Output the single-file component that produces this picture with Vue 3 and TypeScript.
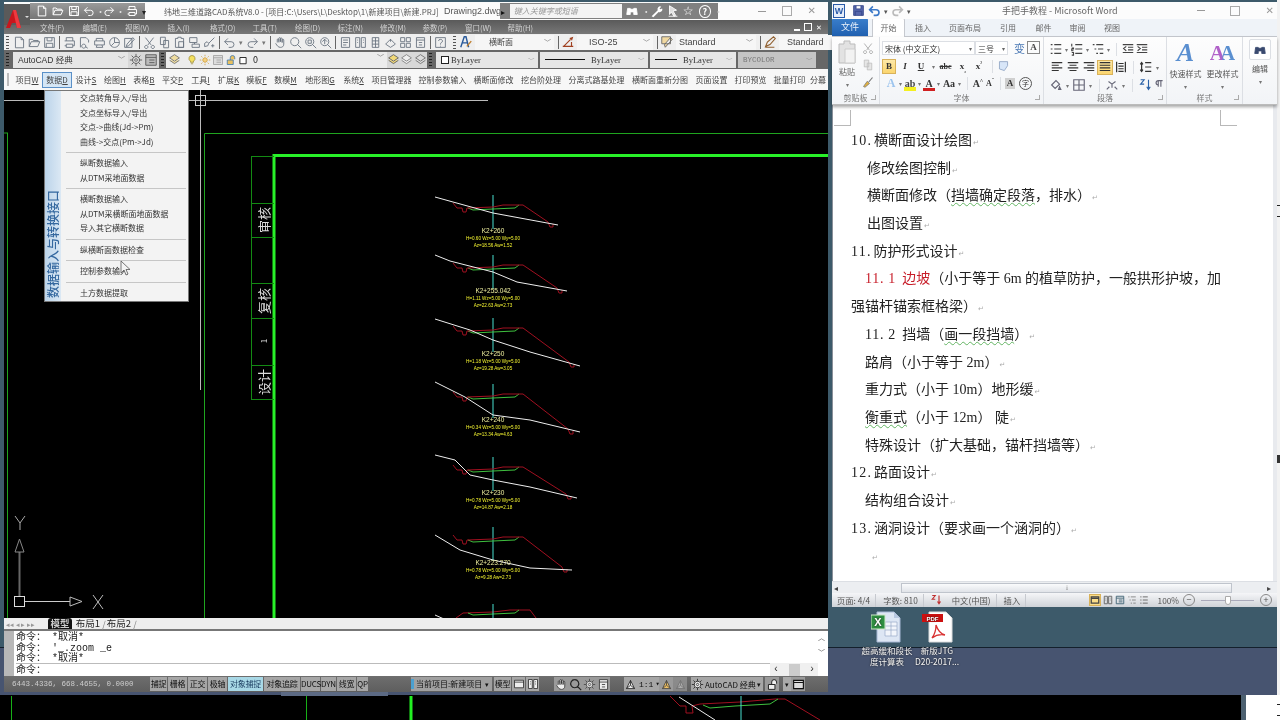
<script setup lang="ts">
const ic: Record<string, string> = {
  file: 'M3 1.500h7l3 3v10H3z M10 1.500v3h3',
  open: 'M1.500 13V4h4l1 1.500h6V7 M1.500 13l2.500-6h10.500l-2.500 6z',
  save: 'M2 2h12v12H2z M5 2v4h6V2 M4 14V9h8v5',
  print: 'M4 6V2h8v4 M2 6h12v6h-2 M4 12H2 M4 10h8v4H4z',
  preview: 'M3 14V2h7l3 3v3 M7 10a2.500 2.500 0 1 0 .1 0 M9 13l3 2',
  plot: 'M4 6V3h8v3 M2 6h12v5H2z M5 11l-1 3h8l-1-3',
  publish: 'M8 2a6 6 0 1 0 .1 0 M8 2v6h6 M4 12l4-4',
  edit: 'M2 14V3h9v11z M5 10l7-8 2 2-7 8-3 1z',
  cut: 'M3 2l7 9 M13 2l-7 9 M4 11.500a2 2 0 1 0 .1 0 M12 11.500a2 2 0 1 0 .1 0',
  copy: 'M3 1.500h6v9H3z M7 5.500h6v9H7z',
  paste: 'M3 3h3V1.500h4V3h3v11H3z M7 7h6v7H7z',
  match: 'M2 2h9v6H2z M5 10h9v4H5z M8 8v2',
  brush: 'M2 13l4-1 1-3-2-2-3 2z M7 9l7-7 M10 12h4 M12 10v4',
  undo: 'M6 3L2 7l4 4 M2 7h8a3.500 3.500 0 0 1 0 7H7',
  redo: 'M10 3l4 4-4 4 M14 7H6a3.500 3.500 0 0 0 0 7h3',
  pan: 'M4 8V4.500a1 1 0 0 1 2 0V8 M6 7V3a1 1 0 0 1 2 0v4 M8 7V3.500a1 1 0 0 1 2 0V8 M10 8V5a1 1 0 0 1 2 0v5c0 3-2 4-4 4-3 0-4-2-6-5',
  zoom: 'M7 2a5 5 0 1 0 .1 0 M10.500 10.500L15 15',
  zoomw: 'M7 2a5 5 0 1 0 .1 0 M10.500 10.500L15 15 M5 5h4v4H5z',
  zoomp: 'M7 2a5 5 0 1 0 .1 0 M10.500 10.500L15 15 M7 4v6 M4 7l3-3 3 3',
  prop: 'M3 2h10v12H3z M5 5h6 M5 8h6 M5 11h4',
  dc: 'M2 2h5v12H2z M9 2h5v12H9z M4 5h1 M4 8h1 M11 5h1 M11 8h1',
  tool: 'M4 2h8v12H4z M4 6h8 M4 10h8 M8 2v12',
  sheet: 'M2 10l6-6 6 6-6 4z M8 4v3',
  calc: 'M2 2h5v5H2z M9 2h5v5H9z M2 9h5v5H2z M9 9h5v5H9z',
  block: 'M3 2h10v12H3z M3 5h10 M6 8h4 M6 11h4',
  help: 'M2 2h12v12H2z M5.500 6a2.500 2 0 1 1 3.500 2L8 9.500v1 M8 12v1',
  gear: 'M8 4a4 4 0 1 0 .1 0 M8 6.500a1.500 1.500 0 1 0 .1 0 M8 1v3 M8 12v3 M1 8h3 M12 8h3 M3 3l2 2 M11 11l2 2 M13 3l-2 2 M5 11l-2 2',
  panel: 'M2 2h12v12H2z M2 5h12 M6 8h6 M6 11h6',
  layers: 'M2 6l6-4 6 4-6 4z M2 9l6 4 6-4',
  bulb: 'M8 2a4 4 0 0 1 2 7.500V11H6V9.500A4 4 0 0 1 8 2z M6.500 13h3',
  sun: 'M8 5a3 3 0 1 0 .1 0 M8 1v2 M8 13v2 M1 8h2 M13 8h2 M3 3l1.500 1.500 M13 3l-1.500 1.500 M3 13l1.500-1.500 M13 13l-1.500-1.500',
  lock: 'M3 8h8v6H3z M7 8V5a3 3 0 0 1 6 0v2',
  square: 'M3 4h10v10H3z',
  pen: 'M3 13l2-5 7-6 2 2-6 7z M3 14h10',
  dim: 'M2 13h12 M3 13l8-8 M10 4l3-1-1 3 M12 13V8',
  style: 'M2 2h10v8H2z M6 14l8-9-2-2-7 8z',
  binoc: 'M3 5h3v7H2zM10 5h3l1 7h-4z M6 6h4v3H6z',
  magnify: 'M7 2a5 5 0 1 0 .1 0 M10.500 10.500L15 15',
  scale: 'M8 3l5 10H3z M8 3v6 M3 13l5-4 5 4',
  win: 'M2 3h12v10H2z M2 5.500h12',
  list: 'M2 3h2 M6 3h8 M2 8h2 M6 8h8 M2 13h2 M6 13h8',
  nums: 'M2 2v3 M6 3h8 M2 7h2v1H2v2h2 M6 8h8 M2 12h2v3H2 M6 13h8',
  levels: 'M2 3h2 M6 3h8 M4 8h2 M8 8h6 M6 13h2 M10 13h4',
  outdent: 'M2 3h12 M8 6h6 M8 9h6 M2 12h12 M6 5L3 7.500 6 10',
  indent: 'M2 3h12 M8 6h6 M8 9h6 M2 12h12 M3 5l3 2.500L3 10',
  left: 'M2 3h12 M2 6h8 M2 9h12 M2 12h8',
  center: 'M2 3h12 M4 6h8 M2 9h12 M4 12h8',
  right: 'M2 3h12 M6 6h8 M2 9h12 M6 12h8',
  justify: 'M2 3h12 M2 6h12 M2 9h12 M2 12h12',
  dist: 'M3 2v12 M13 2v12 M5 4h6 M5 7h6 M5 10h6 M5 13h6',
  spacing: 'M3 3v10 M1.500 5L3 3l1.500 2 M1.500 11L3 13l1.500-2 M7 3h7 M7 8h7 M7 13h7',
  shade: 'M3 8l5-5 4 4-5 5z M12 10l1.500 3H11z',
  border: 'M2 2h12v12H2z M2 8h12 M8 2v12',
  chinese: 'M2 13l3-3 M14 13l-3-3 M4 4l4 3 4-3 M8 7v4',
  sort: 'M3 2h4L3 7h4 M12 2v11 M10 10l2 3 2-3',
  para: 'M6 3v7 M9 3v7 M6 3a2.500 2.500 0 0 0 0 5 M6 3h5',
}

const row1 = ['file', 'open', 'save', '|', 'print', 'preview', 'plot', 'publish', 'edit', '|', 'cut', 'copy', 'paste', 'match', 'brush', '|', 'undo', 'v', 'redo', 'v', '|', 'pan', 'zoom', 'zoomw', 'zoomp', '|', 'prop', 'dc', 'tool', 'sheet', 'calc', 'block', '|', 'help']
const qa = [
  { n: 'file', w: 16 }, { n: 'open', w: 16 }, { n: 'save', w: 16 }, { n: 'undo', w: 14 }, { n: '·', w: 6 },
  { n: 'redo', w: 14 }, { n: '·', w: 8 }, { n: 'print', w: 15 },
]
const cadMenu = ['文件(F)', '编辑(E)', '视图(V)', '插入(I)', '格式(O)', '工具(T)', '绘图(D)', '标注(N)', '修改(M)', '参数(P)', '窗口(W)', '帮助(H)']
const custom = [
  { t: '项目W', w: 30 }, { t: '数据D', w: 30, on: true }, { t: '设计S', w: 28 }, { t: '绘图H', w: 30 }, { t: '表格B', w: 28 },
  { t: '平交P', w: 29 }, { t: '工具I', w: 27 }, { t: '扩展K', w: 29 }, { t: '模板F', w: 27 }, { t: '数模M', w: 31 },
  { t: '地形图G', w: 38 }, { t: '系统X', w: 29 }, { t: '项目管理器', w: 47 }, { t: '控制参数输入', w: 55 }, { t: '横断面修改', w: 47 },
  { t: '挖台阶处理', w: 48 }, { t: '分离式路基处理', w: 63 }, { t: '横断面重新分图', w: 64 }, { t: '页面设置', w: 39 },
  { t: '打印预览', w: 39 }, { t: '批量打印', w: 39 }, { t: '分幕', w: 18 },
]
const menuItems = [
  ['交点转角导入/导出', '交点坐标导入/导出', '交点->曲线(Jd->Pm)', '曲线->交点(Pm->Jd)'],
  ['纵断数据输入', '从DTM采地面数据'],
  ['横断数据输入', '从DTM采横断面地面数据', '导入其它横断数据'],
  ['纵横断面数据检查'],
  ['控制参数输入'],
  ['土方数据提取'],
]

const shift = (pts: number[][], y: number) => pts.map(p => `${p[0]},${p[1] + y}`).join(' ')
const redLine = (y: number, ex: number, ey: number) =>
  shift([[453, 8], [457, 13], [462, 13], [463, 17], [466, 17], [467, 13], [493, 12], [503, 10], [523, 10]], y) +
  ` ${ex - 10},${ey - 3} ${ex - 8},${ey + 2} ${ex - 5},${ey + 2} ${ex - 5},${ey - 1}`
const greenLine = (y: number) => shift([[468, 13], [473, 15], [493, 14], [515, 13], [519, 10]], y)

const sections = [
  { y: 195, ex: 558, ey: 225, ground: '435,197 453,202 493,213 520,218 558,225', k: 'K2+260', a: 'H=0.60 Wz=5.00 Wy=5.00', b: 'Az=18.56 Aw=1.52' },
  { y: 255, ex: 567, ey: 291, ground: '435,255 450,261 493,272 517,282 567,291', k: 'K2+255.042', a: 'H=1.11 Wz=5.00 Wy=5.00', b: 'Az=22.63 Aw=2.73' },
  { y: 318, ex: 579, ey: 365, ground: '435,319 470,330 493,340 530,352 580,366', k: 'K2+250', a: 'H=1.18 Wz=5.00 Wy=5.00', b: 'Az=19.28 Aw=3.05' },
  { y: 384, ex: 578, ey: 432, ground: '435,382 465,397 493,415 530,420 580,432', k: 'K2+240', a: 'H=0.34 Wz=5.00 Wy=5.00', b: 'Az=13.34 Aw=4.63' },
  { y: 457, ex: 576, ey: 497, ground: '435,455 455,460 470,475 493,480 530,487 577,498', k: 'K2+230', a: 'H=0.78 Wz=5.00 Wy=5.00', b: 'Az=14.87 Aw=2.18' },
  { y: 527, ex: 572, ey: 570, ground: '435,535 460,550 493,560 530,568 572,570', k: 'K2+223.270', a: 'H=0.78 Wz=5.00 Wy=5.00', b: 'Az=9.28 Aw=2.73' },
]

const titleCells = [
  { y: 220, t: '审核', s: 13 }, { y: 301, t: '复核', s: 13 }, { y: 341, t: '1', s: 8 }, { y: 382, t: '设计', s: 13 },
]
const cellLines = [156, 203, 237, 283, 318, 365, 399]

const statusBtns = [
  { t: '捕捉', w: 17 }, { t: '栅格', w: 19 }, { t: '正交', w: 19 }, { t: '极轴', w: 19 }, { t: '对象捕捉', w: 35, on: true },
  { t: '对象追踪', w: 36 }, { t: 'DUCS', w: 19 }, { t: 'DYN', w: 15 }, { t: '线宽', w: 19 }, { t: 'QP', w: 11 },
]

const wordTabs = [
  { t: '插入', w: 36 }, { t: '页面布局', w: 48 }, { t: '引用', w: 38 }, { t: '邮件', w: 33 }, { t: '审阅', w: 35 }, { t: '视图', w: 34 },
]
const para1 = ['list', 'nums', 'levels', 'outdent', 'indent']
const para2 = ['left', 'center', 'right', 'justify', 'dist', 'spacing']
const para3 = ['shade', 'border', 'chinese', 'sort', 'para']

type Seg = { t: string; red?: boolean; wavy?: boolean; num?: boolean; num2?: boolean }
const doc: { cls: string; segs: Seg[]; nomark?: boolean }[] = [
  { cls: 'l0', segs: [{ t: '10.', num: true }, { t: '横断面设计绘图' }] },
  { cls: 'l1', segs: [{ t: '修改绘图控制' }] },
  { cls: 'l1', segs: [{ t: '横断面修改（' }, { t: '挡墙确定段落', wavy: true }, { t: '，排水）' }] },
  { cls: 'l1', segs: [{ t: '出图设置' }] },
  { cls: 'l0', segs: [{ t: '11.', num: true }, { t: '防护形式设计' }] },
  { cls: 'l2', nomark: true, segs: [{ t: '11. 1 ', red: true, num2: true }, { t: '边坡', red: true }, { t: '（小于等于 6m 的植草防护，一般拱形护坡，加' }] },
  { cls: 'l0', segs: [{ t: '强锚杆锚索框格梁）' }] },
  { cls: 'l2', segs: [{ t: '11. 2 ', num2: true }, { t: '挡墙（' }, { t: '画一段挡墙', wavy: true }, { t: '）' }] },
  { cls: 'l2', segs: [{ t: '路肩（小于等于 2m）' }] },
  { cls: 'l2', segs: [{ t: '重力式（小于 10m）地形缓' }] },
  { cls: 'l2', segs: [{ t: '衡重式', wavy: true }, { t: '（小于 12m） 陡' }] },
  { cls: 'l2', segs: [{ t: '特殊设计（扩大基础，锚杆挡墙等）' }] },
  { cls: 'l0', segs: [{ t: '12.', num: true }, { t: '路面设计' }] },
  { cls: 'l2', segs: [{ t: '结构组合设计' }] },
  { cls: 'l0', segs: [{ t: '13.', num: true }, { t: '涵洞设计（要求画一个涵洞的）' }] },
  { cls: 'l3', segs: [{ t: '' }] },
]
</script>

<template>
  <div class="screen">
    <!-- behind the windows -->
    <svg class="behind" width="1280" height="720" viewBox="0 0 1280 720">
      <rect x="0" y="0" width="1277" height="648" fill="#3d5a6a" />
      <rect x="0" y="647" width="1277" height="1.500" fill="#14202c" />
      <rect x="0" y="648" width="1277" height="47" fill="#475470" />
      <rect x="281" y="692" width="107" height="4" fill="#5c6a84" />
      <rect x="1277" y="0" width="3" height="695" fill="#f2f2f2" />
      <rect x="1277" y="205" width="3" height="1" fill="#222" />
      <rect x="1277" y="216" width="3" height="1" fill="#222" />
      <rect x="1277" y="455" width="3" height="8" fill="#333" />
      <rect x="1241" y="695" width="5" height="25" fill="#4c6070" />
      <rect x="1246" y="695" width="34" height="25" fill="#fff" />
      <rect x="1277" y="704" width="3" height="1" fill="#222" />
      <rect x="1277" y="715" width="3" height="1" fill="#222" />
      <g fill="none">
        <path d="M11.500 696V720" stroke="#17b017" />
        <path d="M306.500 696V720" stroke="#17b017" />
        <path d="M411 696V720" stroke="#22f022" stroke-width="3" />
        <polyline points="670,696 680,706 686,706 686,713 693,713 692,706 700,704 740,702 775,699 785,699 820,720" stroke="#a01020" />
        <polyline points="679,697 715,720" stroke="#eee" />
        <polyline points="703,705 710,708 735,706 770,704 778,699" stroke="#3fc03f" />
        <path d="M741 696V720" stroke="#48e0d0" />
      </g>
    </svg>

    <!-- CAD window -->
    <section class="cad">
      <header class="cad-title">
        <div class="logo-gap"></div>
        <div class="qa">
          <template v-for="(q, i) in qa" :key="i">
            <span v-if="q.n === '·'" class="qa-dot" :style="{ width: q.w + 'px' }">·</span>
            <span v-else class="qa-slot" :style="{ width: q.w + 'px' }">
              <svg class="i12" viewBox="0 0 16 16"><path :d="ic[q.n]" fill="none" stroke="#fff" stroke-width="1.300" /></svg>
            </span>
          </template>
          <span class="qa-more">▾</span>
        </div>
        <div class="cad-caption">纬地三维道路CAD系统V8.0 - [项目:C:\Users\L\Desktop\1\新建项目\新建.PRJ]</div>
        <div class="cad-doc">Drawing2.dwg</div>
        <div class="search">
          <span class="search-arrow">▸</span>
          <div class="search-box">键入关键字或短语</div>
          <svg class="i14" viewBox="0 0 16 16"><path :d="ic.binoc" fill="#fff" stroke="#fff" /></svg>
          <span class="qa-dot">·</span>
          <svg class="i14" viewBox="0 0 16 16"><path d="M3 14l7-7a3 3 0 0 1 4-4l-2 2 1 1 2-1a3 3 0 0 1-4 4l-6 6z" fill="#fff" /></svg>
          <svg class="i14" viewBox="0 0 16 16"><path d="M4 2l8 5-4 1 3 5-2 1-3-5-2 3z M3 14h10" fill="#ddd" stroke="#fff" /></svg>
          <span class="star">☆</span>
          <span class="q-help">?</span>
          <span class="qa-dot">·</span>
        </div>
        <div class="win-btns">
          <span class="wb-min"></span><span class="wb-max"></span><span class="wb-x">✕</span>
        </div>
      </header>

      <nav class="cad-menu">
        <span v-for="m in cadMenu" :key="m" class="cad-menu-item">{{ m }}</span>
        <span class="mdi">
          <i class="mdi-min"></i><i class="mdi-max"></i><i class="mdi-x">✕</i>
        </span>
      </nav>

      <div class="row1">
        <span class="grip"></span>
        <template v-for="(n, i) in row1" :key="i">
          <span v-if="n === '|'" class="vsep"></span>
          <span v-else-if="n === 'v'" class="mini-v">▾</span>
          <span v-else class="slot">
            <svg class="i13" viewBox="0 0 16 16"><path :d="ic[n]" fill="none" stroke="#6a7480" stroke-width="1.100" /></svg>
          </span>
        </template>
        <span class="grip grip-sp"></span>
        <svg class="i14" viewBox="0 0 16 16"><path d="M2 14L6 2h2l3 12 M4 9h6" fill="none" stroke="#2a5a9a" stroke-width="1.600" /><path d="M9 13l5-6" stroke="#c08030" stroke-width="1.600" /></svg>
        <div class="combo c-a">横断面<b>﹀</b></div>
        <span class="vsep"></span>
        <svg class="i14" viewBox="0 0 16 16"><path :d="ic.dim" fill="none" stroke="#a04020" stroke-width="1.300" /></svg>
        <div class="combo c-b">ISO-25<b>﹀</b></div>
        <span class="vsep"></span>
        <svg class="i14" viewBox="0 0 16 16"><path :d="ic.style" fill="#f0d8a0" stroke="#666" /></svg>
        <div class="combo c-c">Standard<b>﹀</b></div>
        <span class="vsep"></span>
        <svg class="i14" viewBox="0 0 16 16"><path :d="ic.pen" fill="none" stroke="#906030" stroke-width="1.300" /></svg>
        <div class="combo c-d">Standard</div>
      </div>

      <div class="row2">
        <span class="grip grip-d"></span>
        <div class="combo2 w-wk">AutoCAD 经典<b>﹀</b></div>
        <div class="tools2 w-t1">
          <svg class="i14" viewBox="0 0 16 16"><path :d="ic.gear" fill="none" stroke="#555" /></svg>
          <svg class="i14" viewBox="0 0 16 16"><path :d="ic.panel" fill="#bbb" stroke="#555" /></svg>
        </div>
        <span class="grip grip-d grip-m"></span>
        <div class="layer">
          <svg class="i13" viewBox="0 0 16 16"><path :d="ic.layers" fill="#eedca0" stroke="#666" /></svg>
          <svg class="i12 ml4" viewBox="0 0 16 16"><path :d="ic.bulb" fill="#f4e060" stroke="#998830" /></svg>
          <svg class="i12" viewBox="0 0 16 16"><path :d="ic.sun" fill="#f4d080" stroke="#cc9933" /></svg>
          <svg class="i12" viewBox="0 0 16 16"><path :d="ic.panel" fill="#ddd" stroke="#999" /></svg>
          <svg class="i12" viewBox="0 0 16 16"><path :d="ic.lock" fill="#e8c060" stroke="#3070b0" /></svg>
          <svg class="i10" viewBox="0 0 16 16"><path :d="ic.square" fill="#fff" stroke="#222" stroke-width="1.500" /></svg>
          <span class="layer-name">0</span>
          <b>﹀</b>
        </div>
        <div class="tools2 w-t2">
          <svg class="i13" viewBox="0 0 16 16"><path :d="ic.layers" fill="#f0d878" stroke="#555" /></svg>
          <svg class="i13" viewBox="0 0 16 16"><path :d="ic.layers" fill="#eee" stroke="#777" /></svg>
          <svg class="i13" viewBox="0 0 16 16"><path :d="ic.layers" fill="#ddd" stroke="#666" /></svg>
        </div>
        <span class="grip grip-d grip-m"></span>
        <div class="combo2 serif w-by"><i class="swatch"></i>ByLayer<b>﹀</b></div>
        <div class="combo2 serif w-lt"><i class="dash dash-l"></i>ByLayer<b>﹀</b></div>
        <div class="combo2 serif w-lw"><i class="dash"></i>ByLayer<b>﹀</b></div>
        <div class="combo2 mono w-bc">BYCOLOR<b>﹀</b></div>
      </div>

      <div class="row3">
        <span class="grip grip-t"></span>
        <span v-for="c in custom" :key="c.t" class="cust" :class="{ on: c.on }" :style="{ width: c.w + 'px' }">
          {{ c.t.replace(/[A-Z]$/, '') }}<u>{{ /[A-Z]$/.test(c.t) ? c.t.slice(-1) : '' }}</u>
        </span>
      </div>

      <div class="canvas">
        <svg class="drawing" width="824" height="528" viewBox="4 90 824 528">
          <g fill="none">
            <path d="M7.500 133V618 M4 133H8" stroke="#1fa51f" />
            <path d="M204.500 618V133.500H828" stroke="#1fa51f" />
            <path d="M274 618V155.500H828" stroke="#28f028" stroke-width="3" />
            <path d="M251.500 156V399" stroke="#138a13" />
            <path v-for="y in cellLines" :key="y" :d="`M251 ${y + 0.5}H274`" stroke="#138a13" />
            <path d="M4 100.500H488 M200.500 90V390" stroke="#bbb" />
            <rect x="195.500" y="95.500" width="10" height="10" stroke="#ccc" />
          </g>
          <text v-for="c in titleCells" :key="c.y" class="cell-text" :font-size="c.s" :transform="`translate(263 ${c.y}) rotate(-90)`" text-anchor="middle" dominant-baseline="central">{{ c.t }}</text>
          <g v-for="s in sections" :key="s.y" fill="none">
            <path :d="`M493 ${s.y}V${s.y + 34}`" stroke="#48e0d0" />
            <polyline :points="greenLine(s.y)" stroke="#3fc03f" />
            <polyline :points="redLine(s.y, s.ex, s.ey)" stroke="#a01020" />
            <polyline :points="s.ground" stroke="#eee" />
            <text class="k" x="493" :y="s.y + 38" text-anchor="middle">{{ s.k }}</text>
            <text class="h" x="493" :y="s.y + 45" text-anchor="middle">{{ s.a }}</text>
            <text class="h" x="493" :y="s.y + 52" text-anchor="middle">{{ s.b }}</text>
          </g>
          <g fill="none">
            <polyline points="456,618 463,613 493,612 510,610 530,610 536,618" stroke="#a01020" />
            <polyline points="468,613 473,615 493,614 515,613 519,610" stroke="#3fc03f" />
            <polyline points="435,615 444,619" stroke="#eee" />
            <path d="M493 604V618" stroke="#48e0d0" />
            <!-- UCS -->
            <path d="M19.500 552V596" stroke="#666" stroke-width="2" />
            <path d="M19.500 539L15 552H24z" stroke="#888" />
            <rect x="14.500" y="596.500" width="10" height="10" stroke="#ddd" />
            <path d="M25 601.500H70" stroke="#ccc" />
            <path d="M70 597V606L82 601.500z" stroke="#bbb" />
            <path d="M93 595L103 609 M103 595L93 609" stroke="#bbb" />
            <path d="M15 516L20 523L25 516 M20 523V530" stroke="#aaa" />
          </g>
        </svg>
      </div>

      <div class="tabs">
        <span class="tab-nav">◂◂ ◂ ▸ ▸▸</span>
        <span class="tab tab-on">模型</span>
        <span class="tab">布局1</span><i class="tab-slash">/</i>
        <span class="tab">布局2</span><i class="tab-slash">/</i>
      </div>

      <div class="cmd">
        <div class="cmd-grip"></div>
        <div class="cmd-body">
          <div class="cmd-log">
            <div>命令： *取消*</div>
            <div>命令： '_.zoom _e</div>
            <div>命令： *取消*</div>
          </div>
          <div class="cmd-input">命令：</div>
        </div>
        <div class="cmd-scroll">
          <span>︿</span><span>﹀</span>
          <div class="cmd-h"><i>‹</i><em></em><i>›</i></div>
        </div>
      </div>

      <footer class="status">
        <div class="coords">6443.4336, 668.4655, 0.0000</div>
        <span v-for="b in statusBtns" :key="b.t" class="st-btn" :class="{ on: b.on }" :style="{ width: b.w + 'px' }">{{ b.t }}</span>
        <div class="st-gap"></div>
        <div class="st-proj"><i class="st-dot"></i>当前项目:新建项目 <small>▾</small></div>
        <span class="st-btn st-model">模型</span>
        <span class="st-ico"><svg class="i12" viewBox="0 0 16 16"><path :d="ic.win" fill="#eee" stroke="#222" /></svg></span>
        <span class="st-ico"><svg class="i12" viewBox="0 0 16 16"><path :d="ic.dc" fill="#eee" stroke="#222" /></svg></span>
        <div class="st-gap2"></div>
        <span class="st-ico2"><svg class="i13" viewBox="0 0 16 16"><path :d="ic.pan" fill="#eee" stroke="#333" /></svg></span>
        <span class="st-ico2"><svg class="i13" viewBox="0 0 16 16"><path :d="ic.magnify" fill="none" stroke="#222" stroke-width="1.500" /></svg></span>
        <span class="st-ico2"><svg class="i13" viewBox="0 0 16 16"><path :d="ic.gear" fill="#ddd" stroke="#444" /></svg></span>
        <span class="st-ico2"><svg class="i13" viewBox="0 0 16 16"><path :d="ic.block" fill="#eee" stroke="#333" /></svg></span>
        <div class="st-gap3"></div>
        <div class="st-scale"><svg class="i13" viewBox="0 0 16 16"><path :d="ic.scale" fill="#eee" stroke="#222" /></svg><span>1:1</span><small>▾</small></div>
        <span class="st-ico2"><svg class="i13" viewBox="0 0 16 16"><path :d="ic.scale" fill="#f0c060" stroke="#444" /></svg></span>
        <span class="st-ico2 dim"><svg class="i13" viewBox="0 0 16 16"><path :d="ic.scale" fill="#ccc" stroke="#777" /></svg></span>
        <div class="st-wk"><svg class="i13" viewBox="0 0 16 16"><path :d="ic.gear" fill="#eee" stroke="#222" /></svg>AutoCAD 经典<small>▾</small></div>
        <span class="st-ico2"><svg class="i13" viewBox="0 0 16 16"><path :d="ic.lock" fill="#eee" stroke="#222" stroke-width="1.200" /></svg></span>
        <span class="st-more">▾</span>
        <span class="st-ico2"><svg class="i13" viewBox="0 0 16 16"><path :d="ic.win" fill="#ddd" stroke="#111" stroke-width="1.400" /></svg></span>
      </footer>

      <!-- CAD logo lies over title and menu bars -->
      <svg class="logo" width="26" height="27" viewBox="0 0 26 27">
        <rect width="26" height="21" y="2" fill="#5a5a5a" />
        <path d="M2 26L9 8h3l5 18h-4l-1-5H8l-2 5z" fill="#c8161d" />
        <path d="M9 8h3l5 18h-4z" fill="#ee3a40" />
        <path d="M21 14h4l-2 2z" fill="#ddd" />
      </svg>

      <!-- open dropdown -->
      <div class="menu">
        <div class="menu-band"><span>数据输入与转换接口</span></div>
        <div class="menu-list">
          <template v-for="(group, g) in menuItems" :key="g">
            <div v-if="g > 0" class="menu-sep"></div>
            <div v-for="it in group" :key="it" class="menu-item">{{ it }}</div>
          </template>
        </div>
      </div>
      <svg class="cursor" width="12" height="16" viewBox="0 0 12 16">
        <path d="M1 1v12l3-3 2 5 2-1-2-4.500h4z" fill="#f4f4f4" stroke="#555" stroke-width="0.800" />
      </svg>
    </section>

    <!-- Word window -->
    <section class="word">
      <header class="word-title">
        <span class="w-logo">W</span>
        <svg class="i13" viewBox="0 0 16 16"><path :d="ic.save" fill="#5566aa" stroke="#334488" /></svg>
        <svg class="i13" viewBox="0 0 16 16"><path :d="ic.undo" fill="none" stroke="#3a78c8" stroke-width="2" /></svg>
        <span class="w-v">▾</span>
        <svg class="i13" viewBox="0 0 16 16"><path :d="ic.redo" fill="none" stroke="#bbb" stroke-width="2" /></svg>
        <span class="w-v">▾</span>
        <div class="w-caption">手把手教程 - Microsoft Word</div>
        <div class="win-btns w-btns"><span class="wb-min"></span><span class="wb-max"></span><span class="wb-x">✕</span></div>
      </header>

      <nav class="word-tabs">
        <span class="wt-file">文件</span>
        <span class="wt-home">开始</span>
        <span v-for="t in wordTabs" :key="t.t" class="wt" :style="{ width: t.w + 'px' }">{{ t.t }}</span>
      </nav>

      <div class="ribbon">
        <div class="grp g-clip">
          <div class="g-body clip-body">
            <div class="paste">
              <svg width="20" height="24" viewBox="0 0 20 24"><path d="M2 4h5V1h6v3h5v19H2z" fill="#e2e2e2" stroke="#bbb" /><path d="M8 9h10v14H8z" fill="#f2f2f2" stroke="#ccc" /></svg>
              <span>粘贴</span>
              <small>▾</small>
            </div>
            <div class="clip-tools">
              <svg class="i12" viewBox="0 0 16 16"><path :d="ic.cut" fill="none" stroke="#999" /></svg>
              <svg class="i12" viewBox="0 0 16 16"><path :d="ic.copy" fill="#e6e6e6" stroke="#bbb" /></svg>
              <svg class="i12" viewBox="0 0 16 16"><path d="M2 14l5-7 3 3-6 5z" fill="#e0b040" stroke="#777" /><path d="M9 8l5-6" stroke="#777" stroke-width="1.500" /></svg>
            </div>
          </div>
          <div class="g-label">剪贴板<i></i></div>
        </div>

        <div class="grp g-font">
          <div class="g-body font-body">
            <div class="fr fr1">
              <div class="fcombo f-name">宋体 (中文正文)<small>▾</small></div>
              <div class="fcombo f-size">三号<small>▾</small></div>
              <span class="bian">变</span>
              <span class="abox">A</span>
            </div>
            <div class="fr fr2">
              <span class="fb fb-on">B</span>
              <span class="fb it">I</span>
              <span class="fb und">U</span><small class="dn">▾</small>
              <span class="fb st">abc</span>
              <span class="fb">x<sub>₂</sub></span>
              <span class="fb">x<sup>²</sup></span>
              <i class="thin"></i>
              <svg class="i13" viewBox="0 0 16 16"><path d="M3 2h10v5l-4 6-6-2z" fill="#d8e6f8" stroke="#8aa0c0" /></svg>
            </div>
            <div class="fr fr3">
              <span class="fa fa-blue">A</span><small class="dn">▾</small>
              <span class="fa fa-hl">ab</span><small class="dn">▾</small>
              <span class="fa fa-red">A</span><small class="dn">▾</small>
              <span class="fa fa-aa">Aa</span><small class="dn">▾</small>
              <i class="thin"></i>
              <span class="fa">A<sup>^</sup></span>
              <span class="fa fa-sm">A<sup>ˇ</sup></span>
              <i class="thin"></i>
              <span class="fa fa-grey">A</span>
              <span class="fa-circle">字</span>
            </div>
          </div>
          <div class="g-label">字体<i></i></div>
        </div>

        <div class="grp g-para">
          <div class="g-body para-body">
            <div class="pr">
              <template v-for="(p, i) in para1" :key="p">
                <i v-if="i === 3" class="thin"></i>
                <svg class="i14" viewBox="0 0 16 16"><path :d="ic[p]" fill="none" stroke="#444" stroke-width="1.300" /></svg>
                <small v-if="i < 3" class="dn">▾</small>
              </template>
            </div>
            <div class="pr pr2">
              <template v-for="(p, i) in para2" :key="p">
                <i v-if="i === 5" class="thin"></i>
                <span class="pb" :class="{ 'pb-on': p === 'justify' }">
                  <svg class="i14" viewBox="0 0 16 16"><path :d="ic[p]" fill="none" stroke="#333" stroke-width="1.400" /></svg>
                </span>
              </template>
              <small class="dn">▾</small>
            </div>
            <div class="pr pr3">
              <template v-for="(p, i) in para3" :key="p">
                <svg class="i14" viewBox="0 0 16 16"><path :d="ic[p]" fill="none" :stroke="p === 'sort' ? '#2a62a8' : '#667'" stroke-width="1.300" /></svg>
                <small v-if="i < 3" class="dn">▾</small>
                <i v-if="i === 1 || i === 2" class="thin"></i>
              </template>
            </div>
          </div>
          <div class="g-label">段落<i></i></div>
        </div>

        <div class="grp g-style">
          <div class="g-body style-body">
            <div class="st-big">
              <span class="big-a a1">A</span>
              <span>快速样式</span>
              <small>▾</small>
            </div>
            <div class="st-big">
              <span class="big-a a2">AA</span>
              <span>更改样式</span>
              <small>▾</small>
            </div>
          </div>
          <div class="g-label">样式<i></i></div>
        </div>

        <div class="grp g-edit">
          <div class="g-body edit-body">
            <div class="edit-btn"><svg class="i14" viewBox="0 0 16 16"><path :d="ic.binoc" fill="#3a4a70" stroke="#3a4a70" /></svg></div>
            <span>编辑</span>
            <small>▾</small>
          </div>
        </div>
      </div>

      <div class="doc-wrap">
        <div class="page">
          <i class="crop crop-l"></i><i class="crop crop-r"></i>
          <p v-for="(line, i) in doc" :key="i" :class="line.cls">
            <span v-for="(s, j) in line.segs" :key="j" :class="{ red: s.red, wavy: s.wavy, num: s.num, num2: s.num2 }">{{ s.t }}</span><span v-if="!line.nomark" class="mark">↵</span>
          </p>
        </div>
        <div class="vbar"></div>
      </div>

      <div class="hbar">
        <span>◂</span>
        <div class="hthumb">⦙⦙</div>
        <span>▸</span>
      </div>

      <footer class="word-status">
        <span class="ws">页面: 4/4</span>
        <span class="ws">字数: 810</span>
        <span class="ws ws-ic"><svg class="i12" viewBox="0 0 16 16"><path :d="ic.sort" fill="none" stroke="#c03030" stroke-width="1.500" /></svg></span>
        <span class="ws">中文(中国)</span>
        <span class="ws">插入</span>
        <div class="ws-gap"></div>
        <span class="vw vw-on"><svg class="i10" viewBox="0 0 16 16"><path :d="ic.win" fill="none" stroke="#444" stroke-width="2" /></svg></span>
        <span class="vw"><svg class="i10" viewBox="0 0 16 16"><path :d="ic.dc" fill="none" stroke="#666" stroke-width="1.500" /></svg></span>
        <span class="vw"><svg class="i10" viewBox="0 0 16 16"><path :d="ic.panel" fill="none" stroke="#467" stroke-width="1.500" /></svg></span>
        <span class="vw"><svg class="i10" viewBox="0 0 16 16"><path :d="ic.levels" fill="none" stroke="#888" stroke-width="1.500" /></svg></span>
        <span class="vw"><svg class="i10" viewBox="0 0 16 16"><path :d="ic.list" fill="none" stroke="#666" stroke-width="1.500" /></svg></span>
        <span class="zoom-txt">100%</span>
        <span class="zoom-btn">−</span>
        <div class="zoom-track"><i></i></div>
        <span class="zoom-btn zoom-end">+</span>
      </footer>
    </section>

    <!-- desktop shortcuts -->
    <div class="shortcut s-xls">
      <svg width="32" height="32" viewBox="0 0 32 32">
        <path d="M6 1h17l6 6v24H6z" fill="#dde6f4" stroke="#a8b8d4" />
        <path d="M23 1v6h6" fill="#b8c8e0" />
        <path d="M14 11h12v14H14z M14 15h12 M14 19h12 M20 11v14" fill="#f2f5fb" stroke="#98aac8" stroke-width="0.700" />
        <rect x="0" y="4" width="14" height="14" fill="#2f8f42" stroke="#cfe8c8" />
        <text x="7" y="15" class="xl" text-anchor="middle">X</text>
      </svg>
      <span>超高缓和段长<br />度计算表</span>
    </div>
    <div class="shortcut s-pdf">
      <svg width="32" height="32" viewBox="0 0 32 32">
        <path d="M8 1h17l6 6v24H8z" fill="#fff" stroke="#ddd" />
        <rect x="1" y="3" width="21" height="8" fill="#cc1010" />
        <text x="11.500" y="9.500" class="pdf" text-anchor="middle">PDF</text>
        <path d="M15 14c2 6 5 9 9 10-5-1-9 0-13 3 3-4 4-8 4-13z" fill="none" stroke="#d83030" stroke-width="1.300" />
      </svg>
      <span>新版JTG<br />D20-2017...</span>
    </div>
  </div>
</template>

<style>
html, body { margin: 0; background: #000; }
</style>

<style scoped>
.screen {
  position: relative; width: 1280px; height: 720px; overflow: hidden; background: #000;
  font-family: "Noto Sans CJK SC", "Liberation Sans", sans-serif;
  filter: blur(0.35px);
}
.behind { position: absolute; left: 0; top: 0; }
svg { display: block; flex: none; }
.i10 { width: 10px; height: 10px; }
.i12 { width: 12px; height: 12px; }
.i13 { width: 13px; height: 13px; }
.i14 { width: 14px; height: 14px; }
.ml4 { margin-left: 4px; }

/* ---- CAD ---- */
.cad { position: absolute; left: 4px; top: 2px; width: 824px; height: 690px; display: flex; flex-direction: column; background: #666; }
.cad-title { height: 18px; display: flex; align-items: center; background: #fbfbfb; flex: none; }
.logo-gap { width: 26px; }
.logo { position: absolute; left: 0; top: 0; }
.qa { width: 115px; height: 16px; background: linear-gradient(#9a9a9a, #767676); display: flex; align-items: center; padding-left: 4px; box-sizing: border-box; }
.qa-slot { display: flex; justify-content: center; flex: none; }
.qa-dot { color: #ddd; font-size: 9px; width: 4px; text-align: center; flex: none; }
.qa-more { color: #222; font-size: 8px; margin-left: 3px; }
.cad-caption { margin-left: 19px; width: 280px; font-size: 8px; color: #555; white-space: nowrap; }
.cad-doc { font-size: 9px; color: #555; width: 56px; font-family: "Liberation Sans", sans-serif; white-space: nowrap; }
.search { width: 218px; height: 16px; background: #808080; display: flex; align-items: center; gap: 3px; box-sizing: border-box; }
.search-arrow { color: #111; font-size: 8px; width: 7px; text-align: center; }
.search-box { width: 118px; height: 14px; background: #f4f4f4; color: #999; font-size: 8px; font-style: italic; line-height: 14px; padding-left: 4px; box-sizing: border-box; }
.star { color: #fff; font-size: 12px; line-height: 1; font-family: "DejaVu Sans", sans-serif; }
.q-help { width: 11px; height: 11px; border: 1.500px solid #fff; border-radius: 50%; color: #fff; font-size: 9px; line-height: 11px; text-align: center; font-weight: 700; margin-left: 2px; }
.win-btns { margin-left: auto; width: 95px; display: flex; align-items: center; justify-content: space-between; padding: 0 12px 0 25px; box-sizing: border-box; }
.wb-min { width: 8px; height: 1px; background: #999; }
.wb-max { width: 8px; height: 8px; border: 1px solid #aaa; }
.wb-x { color: #999; font-size: 10px; line-height: 1; font-family: "DejaVu Sans", sans-serif; }

.cad-menu { height: 14px; padding-left: 36px; display: flex; align-items: center; background: linear-gradient(#5a5a5a, #777); flex: none; }
.cad-menu-item { width: 42.500px; color: #d4d4d4; font-size: 7.500px; white-space: nowrap; }
.mdi { margin-left: auto; display: flex; gap: 4px; padding-right: 6px; align-items: center; }
.mdi i { width: 6px; height: 6px; color: #fff; font-style: normal; font-size: 7px; line-height: 6px; }
.mdi-min { border-bottom: 2px solid #fff; }
.mdi-max { border: 1px solid #fff; }

.row1 { height: 16px; display: flex; align-items: center; background: #efefef; flex: none; padding-left: 2px; }
.grip { width: 3px; height: 13px; margin-right: 3px; flex: none; background: repeating-linear-gradient(#555 0 1px, transparent 1px 3px); }
.grip-sp { margin-left: 5px; }
.grip-d { background: repeating-linear-gradient(#222 0 1px, transparent 1px 3px); }
.grip-m { margin: 0 2px; }
.grip-t { background: #bbb; width: 2px; margin: 0 3px 0 3px; }
.slot { width: 15px; display: flex; justify-content: center; flex: none; }
.vsep { width: 1px; height: 13px; background: #666; margin: 0 2px; flex: none; }
.mini-v { width: 8px; color: #777; font-size: 7px; text-align: center; flex: none; }
.combo { height: 15px; background: #f6f6f6; color: #444; font-size: 9px; line-height: 15px; position: relative; box-sizing: border-box; padding-left: 12px; flex: none; margin: 0 2px; font-family: "Liberation Sans", "Noto Sans CJK SC", sans-serif; }
.combo b, .combo2 b, .layer b { position: absolute; right: 3px; top: 0; font-size: 7px; color: #777; font-weight: 400; }
.c-a { width: 79px; padding-left: 14px; font-size: 8px; }
.c-b { width: 76px; padding-left: 12px; }
.c-c { width: 80px; padding-left: 3px; }
.c-d { width: 54px; padding-left: 8px; }

.row2 { height: 19px; display: flex; align-items: center; background: #676767; flex: none; padding-left: 2px; }
.combo2 { height: 16px; position: relative; background: #e6e6e6; color: #333; font-size: 8.500px; line-height: 16px; padding-left: 5px; box-sizing: border-box; flex: none; display: flex; align-items: center; font-family: "Liberation Sans", "Noto Sans CJK SC", sans-serif; }
.combo2.serif { font-family: "Liberation Serif", serif; margin-left: 2px; font-size: 8.500px; }
.combo2.mono { font-family: "Liberation Mono", monospace; background: #c4c4c4; color: #777; font-size: 7.500px; margin-left: 2px; }
.w-wk { width: 115px; margin-left: 1px; }
.w-t1 { width: 31px; }
.tools2 { height: 16px; background: #d8d8d8; display: flex; align-items: center; justify-content: space-around; box-sizing: border-box; flex: none; }
.layer { width: 221px; height: 16px; position: relative; background: #ececec; display: flex; align-items: center; gap: 1px; flex: none; padding-left: 2px; box-sizing: border-box; }
.layer-name { margin-left: 4px; font-size: 9px; color: #222; }
.w-t2 { width: 40px; }
.w-by { width: 102px; }
.w-lt { width: 108px; }
.w-lw { width: 86px; }
.w-bc { width: 78px; }
.swatch { width: 6px; height: 6px; border: 1px solid #222; background: #fff; margin-right: 2px; }
.dash { width: 22px; height: 1px; background: #111; margin-right: 6px; }
.dash-l { width: 40px; }

.row3 { height: 21px; display: flex; align-items: center; background: #f7f7f7; flex: none; white-space: nowrap; }
.cust { font-size: 8px; color: #444; height: 16px; line-height: 16px; flex: none; text-align: center; box-sizing: border-box; }
.cust u { text-decoration: underline; }
.cust.on { background: #d5e6f5; border: 1px solid #5a90c8; line-height: 14px; }

.canvas { flex: 1; background: #000; min-height: 0; overflow: hidden; }
.drawing { display: block; }
.cell-text { fill: #ddd; }
.k { fill: #f0f0a0; font-size: 6.500px; font-family: "Liberation Sans", sans-serif; }
.h { fill: #f4f430; font-size: 4.600px; font-family: "Liberation Sans", sans-serif; }

.tabs { height: 11px; background: #eee; display: flex; align-items: center; font-size: 9.500px; color: #222; flex: none; border-bottom: 2px solid #777; padding-left: 2px; }
.tab-nav { width: 42px; color: #999; font-size: 7px; white-space: nowrap; overflow: hidden; }
.tab { width: 28px; text-align: center; line-height: 11px; white-space: nowrap; }
.tab-on { background: #111; color: #ccc; width: 24px; margin-right: 2px; border-radius: 3px 3px 0 0; font-weight: 700; }
.tab-slash { font-style: normal; color: #888; width: 3px; }

.cmd { height: 45px; display: flex; flex: none; background: #fff; font-family: "Liberation Mono", "Noto Sans CJK SC", monospace; font-size: 10px; color: #222; }
.cmd-grip { width: 10px; background: #b8b8b8; }
.cmd-body { flex: 1; display: flex; flex-direction: column; padding-left: 2px; }
.cmd-log { height: 31px; padding-top: 1px; border-bottom: 1px solid #bbb; }
.cmd-log div { height: 10.700px; line-height: 11px; white-space: nowrap; }
.cmd-input { line-height: 13px; }
.cmd-scroll { width: 58px; position: relative; display: flex; flex-direction: column; align-items: flex-end; padding-right: 3px; box-sizing: border-box; font-size: 7px; color: #555; }
.cmd-scroll span { height: 15px; line-height: 15px; }
.cmd-h { position: absolute; right: 10px; bottom: 0; width: 48px; height: 13px; background: #f0f0f0; display: flex; align-items: center; justify-content: space-between; padding: 0 3px; box-sizing: border-box; font-size: 10px; }
.cmd-h i { font-style: normal; color: #333; }
.cmd-h em { width: 11px; height: 12px; background: #ccc; }

.status { height: 16px; display: flex; align-items: center; background: linear-gradient(#6e6e6e, #5e5e5e); font-size: 8px; color: #111; flex: none; white-space: nowrap; }
.coords { width: 146px; padding-left: 8px; box-sizing: border-box; color: #ccc; font-family: "Liberation Mono", monospace; font-size: 7.500px; }
.st-btn { height: 14px; line-height: 14px; text-align: center; background: #a6a6a6; margin-right: 1px; flex: none; letter-spacing: -.2px; }
.st-btn.on { background: #a8d8e6; color: #246; }
.st-gap { width: 42px; flex: none; }
.st-proj { width: 81px; height: 14px; line-height: 14px; background: #a0a0a0; display: flex; align-items: center; flex: none; }
.st-dot { width: 3px; height: 10px; background: #4aa0d0; margin-right: 2px; }
.st-proj small { font-size: 7px; margin-left: 3px; }
.st-model { width: 17px; margin-left: 2px; }
.st-ico { width: 13px; height: 14px; background: #a6a6a6; display: flex; align-items: center; justify-content: center; flex: none; margin-right: 1px; }
.st-gap2 { width: 14px; flex: none; }
.st-ico2 { width: 14px; height: 14px; background: #9a9a9a; display: flex; align-items: center; justify-content: center; flex: none; }
.st-ico2.dim { opacity: .7; }
.st-gap3 { width: 14px; flex: none; }
.st-scale { width: 35px; height: 14px; background: #a6a6a6; display: flex; align-items: center; flex: none; gap: 2px; font-family: "Liberation Mono", monospace; }
.st-scale small, .st-wk small { font-size: 7px; }
.st-wk { width: 72px; margin: 0 2px 0 4px; height: 14px; background: #a6a6a6; display: flex; align-items: center; flex: none; font-size: 8px; gap: 1px; }
.st-more { width: 8px; height: 14px; background: #aaa; margin-left: 4px; font-size: 7px; line-height: 14px; text-align: center; }

.menu { position: absolute; left: 40px; top: 88px; width: 145px; height: 212px; display: flex; background: #f3f3f3; border: 1px solid #777; box-sizing: border-box; }
.menu-band { width: 16px; background: linear-gradient(90deg, #bcd4ea, #dbe8f4); display: flex; flex-direction: column; justify-content: flex-end; flex: none; }
.menu-band span { writing-mode: vertical-rl; text-orientation: sideways; transform: rotate(180deg); color: #35689f; font-size: 12px; font-weight: 500; line-height: 16px; white-space: nowrap; padding-top: 3px; }
.menu-list { flex: 1; }
.menu-item { height: 14.500px; line-height: 14.500px; font-size: 8px; color: #333; padding-left: 19px; white-space: nowrap; }
.menu-sep { height: 7px; position: relative; }
.menu-sep::after { content: ""; position: absolute; left: 5px; right: 2px; top: 3px; height: 1px; background: #c6c6c6; }
.cursor { position: absolute; left: 116px; top: 258px; }

/* ---- Word ---- */
.word { position: absolute; left: 832px; top: 2px; width: 445px; height: 605px; display: flex; flex-direction: column; background: #fff; }
.word-title { height: 17px; display: flex; align-items: center; gap: 3px; padding-left: 1px; background: #fcfcfc; flex: none; position: relative; }
.w-logo { width: 10px; height: 12px; border: 1px solid #2a5aa8; color: #2a5aa8; background: #e6eefa; font: 700 9px/12px "Liberation Sans", sans-serif; text-align: center; margin-right: 4px; }
.w-v { font-size: 7px; color: #555; }
.w-caption { position: absolute; left: 170px; font-size: 9px; color: #666; white-space: nowrap; }
.w-btns { margin-left: auto; width: 190px; padding: 0 3px 0 110px; }

.word-tabs { height: 18px; display: flex; align-items: flex-end; background: #eff3f8; flex: none; border-bottom: 1px solid #c6c9cf; font-size: 8px; color: #666; box-sizing: border-box; }
.wt-file { width: 36px; height: 18px; line-height: 18px; text-align: center; background: linear-gradient(#3a7fcc, #2060b0); color: #e8f0fa; border-radius: 2px 2px 0 0; font-size: 9px; flex: none; }
.wt-home { width: 33px; height: 19px; margin: 0 0 -1px 4px; line-height: 18px; text-align: center; background: #fff; border: 1px solid #c6c9cf; border-bottom: 0; box-sizing: border-box; border-radius: 2px 2px 0 0; flex: none; }
.wt { line-height: 17px; text-align: center; flex: none; }

.ribbon { height: 68px; display: flex; flex: none; background: linear-gradient(#fdfdfd, #f2f4f7); border-bottom: 1px solid #bbb; box-shadow: 0 2px 3px rgba(0, 0, 0, .35); position: relative; z-index: 1; box-sizing: border-box; }
.grp { display: flex; flex-direction: column; border-right: 1px solid #dcdfe4; box-sizing: border-box; flex: none; }
.g-clip { width: 48px; }
.g-font { width: 164px; }
.g-para { width: 123px; }
.g-style { width: 76px; }
.g-edit { flex: 1; border-right: 0; }
.g-body { flex: 1; min-height: 0; }
.g-label { height: 13px; line-height: 13px; text-align: center; font-size: 8px; color: #777; position: relative; flex: none; }
.g-label i { position: absolute; right: 3px; top: 4px; width: 4px; height: 4px; border: 1px solid #aaa; border-left: 0; border-top: 0; }
.clip-body { display: flex; }
.paste { width: 30px; display: flex; flex-direction: column; align-items: center; font-size: 8px; color: #666; padding-top: 3px; line-height: 10px; gap: 3px; }
.paste small { font-size: 6px; color: #777; }
.clip-tools { flex: 1; display: flex; flex-direction: column; gap: 5px; padding-top: 5px; }
.font-body { padding: 3px 0 0 2px; display: flex; flex-direction: column; }
.fr { height: 17px; display: flex; align-items: center; flex: none; }
.fr1 { height: 15px; margin-bottom: 3px; }
.fcombo { height: 14px; line-height: 14px; background: #fff; border: 1px solid #dcdfe4; box-sizing: border-box; font-size: 8px; color: #333; padding-left: 2px; position: relative; white-space: nowrap; flex: none; }
.fcombo small { position: absolute; right: 2px; font-size: 6px; color: #666; }
.f-name { width: 93px; }
.f-size { width: 33px; }
.bian { margin-left: 4px; font-size: 11px; color: #4a78b4; width: 15px; text-align: center; }
.abox { width: 11px; height: 11px; border: 1px solid #888; font: 700 9px/11px "Liberation Serif", serif; text-align: center; color: #444; }
.fb { width: 14px; height: 15px; line-height: 15px; text-align: center; font: 700 9px/15px "Liberation Serif", serif; color: #333; margin-right: 2px; flex: none; }
.fb sub, .fb sup { font-size: 6px; line-height: 0; }
.fb-on { background: linear-gradient(#fde9a8, #fbd56e); border: 1px solid #d9b25a; box-sizing: border-box; line-height: 13px; }
.it { font-style: italic; }
.und { text-decoration: underline; }
.st { text-decoration: line-through; width: 17px; font-size: 8px; }
.dn { font-size: 6px; color: #777; width: 7px; text-align: center; flex: none; }
.thin { width: 1px; height: 13px; background: #dcdfe4; margin: 0 4px; flex: none; }
.fa { font: 700 10px/15px "Liberation Serif", serif; color: #333; width: 12px; text-align: center; flex: none; }
.fa sup { font-size: 6px; line-height: 0; }
.fa-blue { color: #9cc4ee; font-size: 12px; margin-left: 3px; }
.fa-hl { color: #444; background: linear-gradient(transparent 70%, #f4f020 70%); }
.fa-red { color: #333; box-shadow: inset 0 -3px #d02020; height: 15px; }
.fa-aa { width: 14px; }
.fa-sm { font-size: 8px; }
.fa-grey { background: #cfcfcf; width: 10px; height: 11px; line-height: 11px; margin-right: 4px; font-size: 9px; }
.fa-circle { width: 11px; height: 11px; border: 1px solid #555; border-radius: 50%; font-size: 7px; line-height: 11px; text-align: center; color: #333; }
.para-body { padding: 3px 0 0 5px; display: flex; flex-direction: column; }
.pr { height: 18px; display: flex; align-items: center; flex: none; }
.pb { width: 16px; height: 15px; display: flex; align-items: center; justify-content: center; flex: none; box-sizing: border-box; }
.pb-on { background: linear-gradient(#fde9a8, #fbd56e); border: 1px solid #d9b25a; }
.pr3 { gap: 1px; }
.style-body { display: flex; padding-top: 1px; }
.st-big { width: 37px; display: flex; flex-direction: column; align-items: center; font-size: 8px; color: #555; white-space: nowrap; line-height: 11px; }
.st-big small { font-size: 6px; color: #777; margin-top: 2px; }
.big-a { height: 30px; font: 700 26px/30px "Liberation Serif", serif; }
.a1 { color: #5a8fd0; font-style: italic; }
.a2 { font-size: 21px; letter-spacing: -5px; padding-right: 5px; background: linear-gradient(90deg, #b060c8 45%, #5a8fd0 55%); -webkit-background-clip: text; background-clip: text; color: transparent; }
.edit-body { display: flex; flex-direction: column; align-items: center; font-size: 8px; color: #555; padding-top: 2px; line-height: 10px; }
.edit-btn { width: 20px; height: 19px; border: 1px solid #dcdfe4; border-radius: 2px; background: #fff; display: flex; align-items: center; justify-content: center; margin-bottom: 4px; }
.edit-body small { font-size: 6px; margin-top: 3px; color: #777; }

.doc-wrap { flex: 1; display: flex; min-height: 0; background: #fff; border-left: 1px solid #8a9099; }
.page { flex: 1; position: relative; padding-top: 22px; color: #222; font-family: "Liberation Serif", "Noto Sans CJK SC", serif; font-size: 14px; overflow: hidden; }
.page p { margin: 0; height: 27.700px; line-height: 27.700px; white-space: nowrap; padding-left: 18px; }
.page p.l1 { padding-left: 34px; }
.page p.l2 { padding-left: 32px; }
.page p.l3 { padding-left: 38px; }
.num { letter-spacing: 1.200px; margin-right: 2px; }
.num2 { letter-spacing: .7px; margin-right: 2px; }
.red { color: #c81e2a; }
.wavy { text-decoration: underline wavy #63b463 1px; text-underline-offset: 2px; }
.mark { color: #aaa; font-size: 7px; font-family: "DejaVu Sans", sans-serif; margin-left: 1px; }
.crop { position: absolute; top: 5px; width: 16px; height: 15px; border-bottom: 1px solid #b8b8b8; }
.crop-l { left: 1px; border-right: 1px solid #b8b8b8; }
.crop-r { left: 387px; border-left: 1px solid #b8b8b8; }
.vbar { width: 4px; background: #e8eaee; flex: none; }
.hbar { height: 12px; background: #eceef1; display: flex; align-items: center; flex: none; font-size: 8px; color: #444; padding: 0 6px 0 2px; border-top: 1px solid #dcdfe4; box-sizing: border-box; }
.hthumb { width: 331px; height: 10px; margin: 0 auto 0 63px; background: linear-gradient(#fafbfc, #e0e3e8); border: 1px solid #bfc4cc; box-sizing: border-box; text-align: center; font-size: 6px; line-height: 8px; color: #888; }
.word-status { height: 14px; display: flex; align-items: center; background: linear-gradient(#f5f6f8, #cfd3d8); font-size: 8.300px; color: #555; white-space: nowrap; flex: none; }
.ws { padding: 0 5px; height: 13px; line-height: 13px; border-right: 1px solid #c6c9cf; margin-right: 2px; }
.ws-ic { display: flex; align-items: center; border: 0; padding: 0 3px 0 4px; }
.ws-gap { flex: 1; }
.vw { width: 12px; display: flex; justify-content: center; }
.vw-on { height: 12px; background: #fbdd88; border: 1px solid #d9b25a; box-sizing: border-box; align-items: center; margin-right: 1px; }
.zoom-txt { margin: 0 4px 0 8px; }
.zoom-btn { width: 10px; height: 10px; border: 1px solid #888; border-radius: 50%; text-align: center; line-height: 10px; font-size: 9px; flex: none; }
.zoom-end { margin-right: 5px; }
.zoom-track { width: 53px; height: 1px; background: #aab; margin: 0 6px; position: relative; flex: none; }
.zoom-track i { position: absolute; left: 24px; top: -4px; width: 6px; height: 9px; background: #fff; border: 1px solid #aaa; box-sizing: border-box; border-radius: 0 0 3px 3px; }

/* ---- desktop ---- */
.shortcut { position: absolute; top: 611px; display: flex; flex-direction: column; align-items: center; width: 60px; color: #f4f4f4; font-size: 8.500px; line-height: 10.500px; text-align: center; text-shadow: 0 0 2px #111; white-space: nowrap; }
.shortcut span { margin-top: 2px; }
.s-xls { left: 857px; }
.s-pdf { left: 907px; }
.xl { fill: #fff; font: 700 11px "Liberation Sans", sans-serif; }
.pdf { fill: #fff; font: 700 6px "Liberation Sans", sans-serif; }
</style>
